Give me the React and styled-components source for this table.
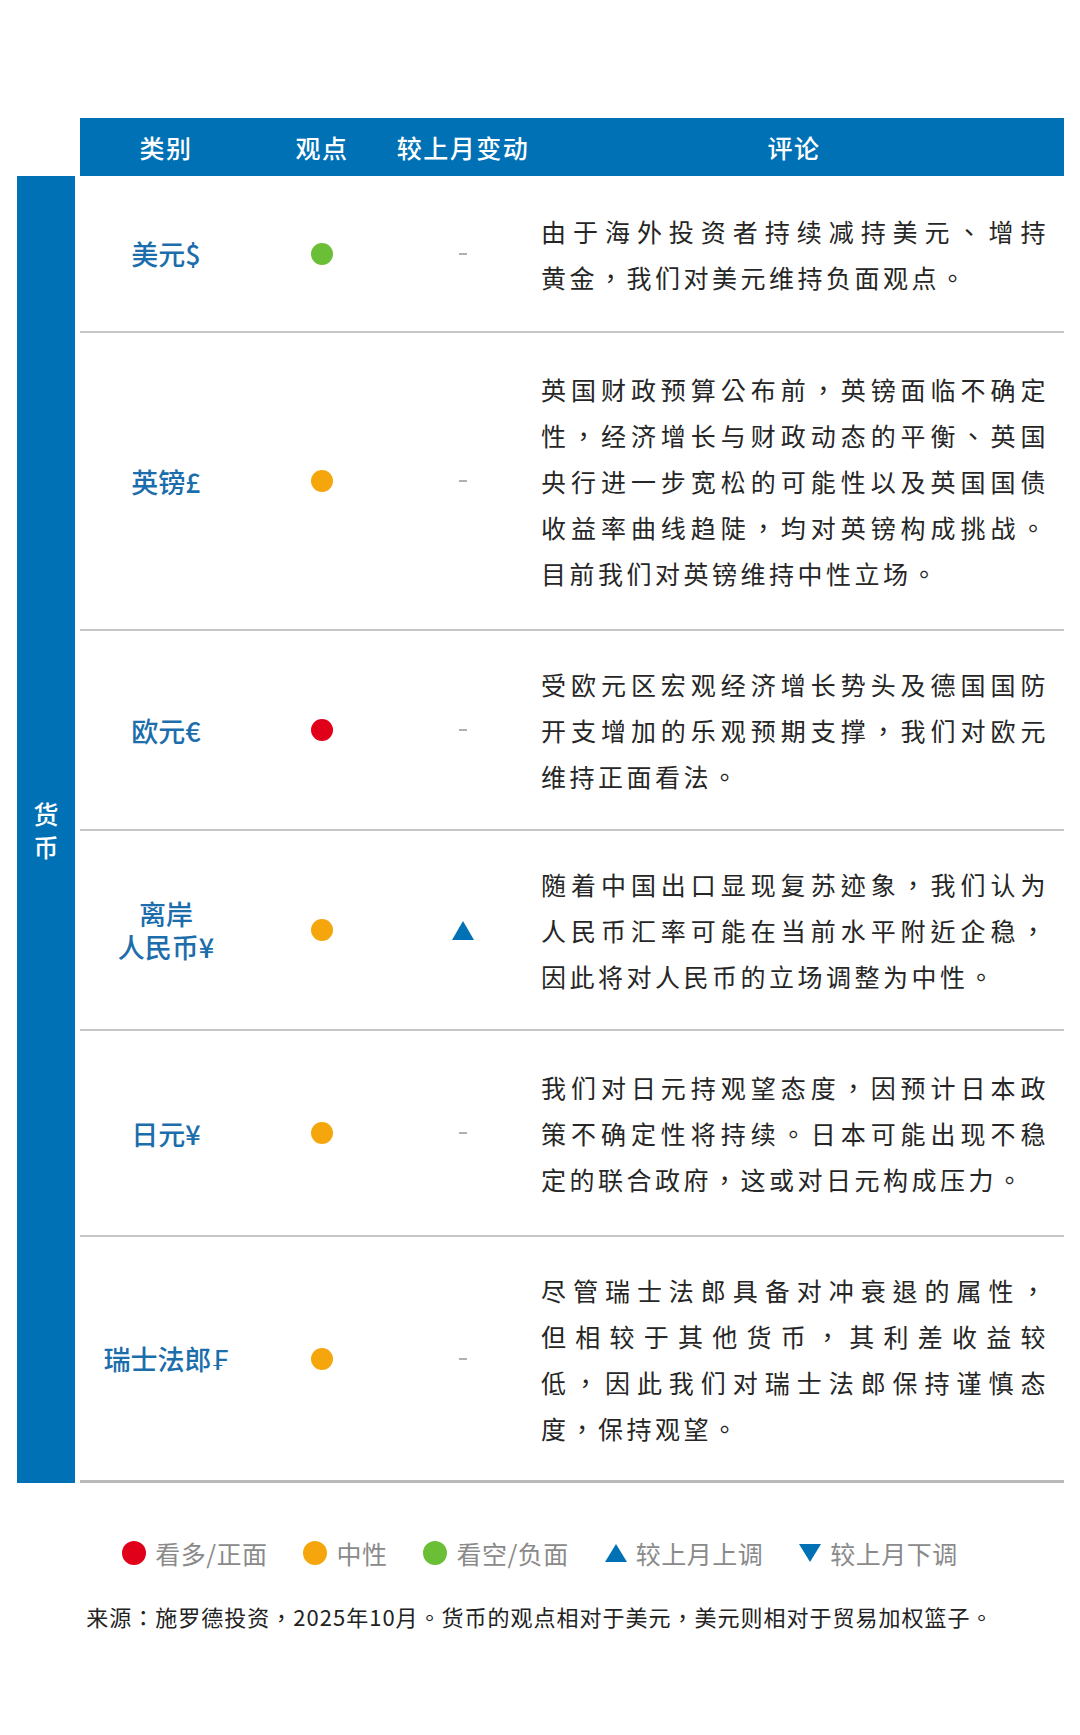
import React from "react";
import styled, { createGlobalStyle } from "styled-components";

const BLUE = "#0071b5";
const COLORS = { red: "#e1001a", orange: "#f5a60c", green: "#6bbf37" };

const GlobalStyle = createGlobalStyle`
  html, body { margin: 0; padding: 0; background: #fff; }
  body { font-family: "Noto Sans CJK SC", "Noto Sans", sans-serif; }
`;

const Page = styled.div`
  width: 1080px;
  min-height: 1735px;
  box-sizing: border-box;
  padding-top: 118px;
  background: #fff;
`;

const Table = styled.div`
  display: grid;
  grid-template-columns: 58px 984px;
  grid-template-rows: auto auto;
  column-gap: 5px;
  margin-left: 17px;
`;

const COLS = "172px 140px 142px 530px";

const HeaderRow = styled.div`
  grid-column: 2;
  grid-row: 1;
  display: grid;
  grid-template-columns: ${COLS};
  height: 58px;
  align-items: center;
  background: ${BLUE};
`;

const HeadCell = styled.div`
  color: #fff;
  font-size: 25px;
  font-weight: 500;
  letter-spacing: 1.5px;
  text-align: center;
  padding-right: ${(p) => p.$shift || 0}px;
`;

const SideBar = styled.div`
  grid-column: 1;
  grid-row: 2;
  background: ${BLUE};
  display: flex;
  align-items: center;
  justify-content: center;
`;

const SideLabel = styled.div`
  color: #fff;
  font-size: 25px;
  font-weight: 500;
  line-height: 33px;
  text-align: center;
`;

const Body = styled.div`
  grid-column: 2;
  grid-row: 2;
`;

const Row = styled.div`
  display: grid;
  grid-template-columns: ${COLS};
  align-items: center;
  box-sizing: border-box;
  height: ${(p) => p.$h}px;
  border-bottom: ${(p) => (p.$last ? "3px solid #b9b9b9" : "2px solid #c6c6c6")};
`;

const Label = styled.div`
  color: #1b6dab;
  font-size: 27px;
  font-weight: 500;
  line-height: 33px;
  text-align: center;
  font-family: "Noto Sans CJK SC", "DejaVu Sans", sans-serif;
`;

const Center = styled.div`
  display: flex;
  justify-content: center;
  align-items: center;
`;

const Dot = styled.span`
  display: block;
  width: ${(p) => p.$size || 22}px;
  height: ${(p) => p.$size || 22}px;
  border-radius: 50%;
  background: ${(p) => COLORS[p.$color]};
`;

const Dash = styled.span`
  display: block;
  width: 8px;
  height: 2px;
  background: #b0b0b0;
`;

const Comment = styled.div`
  padding: 0 15px 0 7px;
  color: #262626;
  font-family: "Noto Sans CJK TC", sans-serif;
  font-size: 25px;
  letter-spacing: 3.5px;
  line-height: 46px;
`;

const Line = styled.div`
  text-align: justify;
  text-align-last: ${(p) => (p.$fill ? "justify" : "left")};
  white-space: nowrap;
`;

const Legend = styled.div`
  display: flex;
  justify-content: center;
  align-items: center;
  gap: 36px;
  margin-top: 55px;
`;

const LegendItem = styled.div`
  display: flex;
  align-items: center;
  gap: 9px;
`;

const LegendText = styled.span`
  color: #8a8a8a;
  font-size: 25px;
  letter-spacing: 0.5px;
  line-height: 30px;
`;

const Source = styled.div`
  margin-top: 33px;
  text-align: center;
  color: #222;
  font-family: "Noto Sans CJK TC", sans-serif;
  font-size: 22px;
  letter-spacing: 1px;
  line-height: 30px;
`;

const Triangle = ({ down, w = 22, h = 19 }) => (
  <svg width={w} height={h} viewBox={`0 0 ${w} ${h}`} style={{ display: "block" }}>
    <polygon
      points={down ? `0,0 ${w},0 ${w / 2},${h}` : `${w / 2},0 ${w},${h} 0,${h}`}
      fill={BLUE}
    />
  </svg>
);

const rows = [
  {
    h: 157,
    label: ["美元$"],
    view: "green",
    change: null,
    lines: ["由于海外投资者持续减持美元、增持", "黄金，我们对美元维持负面观点。"],
  },
  {
    h: 298,
    label: ["英镑£"],
    view: "orange",
    change: null,
    lines: [
      "英国财政预算公布前，英镑面临不确定",
      "性，经济增长与财政动态的平衡、英国",
      "央行进一步宽松的可能性以及英国国债",
      "收益率曲线趋陡，均对英镑构成挑战。",
      "目前我们对英镑维持中性立场。",
    ],
  },
  {
    h: 200,
    label: ["欧元€"],
    view: "red",
    change: null,
    lines: [
      "受欧元区宏观经济增长势头及德国国防",
      "开支增加的乐观预期支撑，我们对欧元",
      "维持正面看法。",
    ],
  },
  {
    h: 200,
    label: ["离岸", "人民币¥"],
    view: "orange",
    change: "up",
    lines: [
      "随着中国出口显现复苏迹象，我们认为",
      "人民币汇率可能在当前水平附近企稳，",
      "因此将对人民币的立场调整为中性。",
    ],
  },
  {
    h: 206,
    label: ["日元¥"],
    view: "orange",
    change: null,
    lines: [
      "我们对日元持观望态度，因预计日本政",
      "策不确定性将持续。日本可能出现不稳",
      "定的联合政府，这或对日元构成压力。",
    ],
  },
  {
    h: 246,
    label: ["瑞士法郎₣"],
    view: "orange",
    change: null,
    lines: [
      "尽管瑞士法郎具备对冲衰退的属性，",
      "但相较于其他货币，其利差收益较",
      "低，因此我们对瑞士法郎保持谨慎态",
      "度，保持观望。",
    ],
  },
];

export default function App() {
  return (
    <Page>
      <GlobalStyle />
      <Table>
        <HeaderRow>
          <HeadCell>类别</HeadCell>
          <HeadCell>观点</HeadCell>
          <HeadCell>较上月变动</HeadCell>
          <HeadCell $shift={10}>评论</HeadCell>
        </HeaderRow>
        <SideBar>
          <SideLabel>
            货<br />币
          </SideLabel>
        </SideBar>
        <Body>
          {rows.map((r, i) => (
            <Row key={i} $h={r.h} $last={i === rows.length - 1}>
              <Label>
                {r.label.map((l, j) => (
                  <React.Fragment key={j}>
                    {j > 0 && <br />}
                    {l}
                  </React.Fragment>
                ))}
              </Label>
              <Center>
                <Dot $color={r.view} />
              </Center>
              <Center>{r.change === "up" ? <Triangle /> : <Dash />}</Center>
              <Comment lang="zh-TW">
                {r.lines.map((l, j) => (
                  <Line key={j} $fill={j < r.lines.length - 1}>
                    {l}
                  </Line>
                ))}
              </Comment>
            </Row>
          ))}
        </Body>
      </Table>
      <Legend>
        <LegendItem>
          <Dot $color="red" $size={24} />
          <LegendText>看多/正面</LegendText>
        </LegendItem>
        <LegendItem>
          <Dot $color="orange" $size={24} />
          <LegendText>中性</LegendText>
        </LegendItem>
        <LegendItem>
          <Dot $color="green" $size={24} />
          <LegendText>看空/负面</LegendText>
        </LegendItem>
        <LegendItem>
          <Triangle w={22} h={18} />
          <LegendText>较上月上调</LegendText>
        </LegendItem>
        <LegendItem>
          <Triangle down w={22} h={18} />
          <LegendText>较上月下调</LegendText>
        </LegendItem>
      </Legend>
      <Source lang="zh-TW">
        来源：施罗德投资，2025年10月。货币的观点相对于美元，美元则相对于贸易加权篮子。
      </Source>
    </Page>
  );
}
